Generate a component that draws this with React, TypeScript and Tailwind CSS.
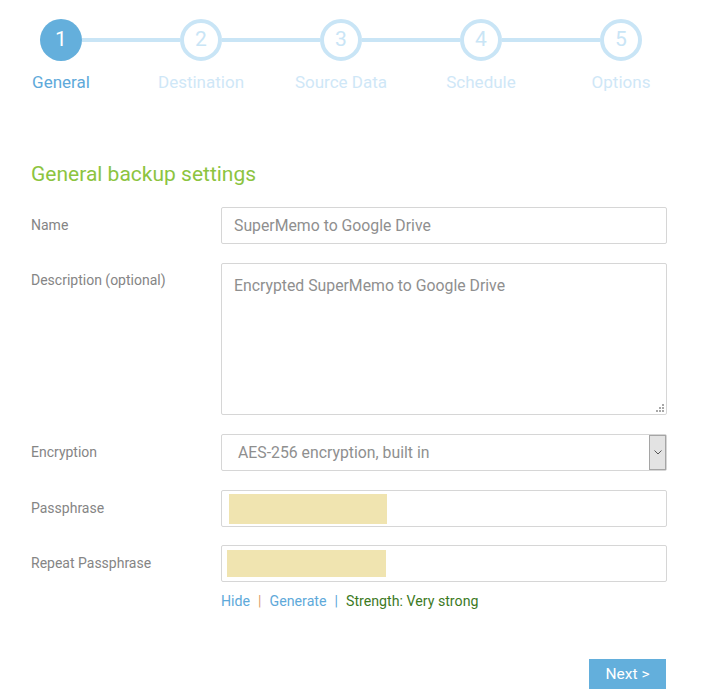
import React from "react";

const steps = ["General", "Destination", "Source Data", "Schedule", "Options"];

const Stepper = () => (
  <div className="flex items-start pl-[40px] pt-[19px]">
    {steps.map((label, i) => (
      <React.Fragment key={label}>
        {i > 0 && <div className="mt-[19px] h-[4px] w-[98px] shrink-0 bg-[#c9e5f6]" />}
        <div className="flex w-[42px] shrink-0 flex-col items-center">
          {i === 0 ? (
            <div className="flex h-[42px] w-[42px] items-center justify-center rounded-full bg-[#64afdc] text-[21px] text-white">
              {i + 1}
            </div>
          ) : (
            <div className="flex h-[42px] w-[42px] items-center justify-center rounded-full border-[4px] border-[#c9e5f6] bg-white text-[21px] text-[#c9e5f6]">
              {i + 1}
            </div>
          )}
          <div
            className={
              "mt-[10px] whitespace-nowrap text-[17px] leading-[22px] " +
              (i === 0 ? "text-[#5ea9da]" : "text-[#cfe7f7]")
            }
          >
            {label}
          </div>
        </div>
      </React.Fragment>
    ))}
  </div>
);

const Row = ({ label, top, children }: { label: string; top?: boolean; children: React.ReactNode }) => (
  <div className={"flex " + (top ? "items-start" : "items-center")}>
    <div className={"w-[190px] shrink-0 text-[14px] text-[#858585] " + (top ? "pt-[7px]" : "")}>{label}</div>
    <div className="w-[446px]">{children}</div>
  </div>
);

export default function App() {
  return (
    <div className="h-[698px] w-[710px] bg-white font-['Roboto',sans-serif]">
      <Stepper />
      <div className="pl-[31px]">
        <h2 className="mt-[67px] text-[21px] leading-[28px] text-[#8cc43f]">General backup settings</h2>
        <div className="mt-[19px] flex flex-col">
          <Row label="Name">
            <div className="flex h-[37px] items-center rounded-[2px] border border-[#d6d6d6] px-[12px] text-[15.8px] text-[#8f8f8f]">
              SuperMemo to Google Drive
            </div>
          </Row>
          <div className="mt-[19px]">
            <Row label="Description (optional)" top>
              <div className="relative h-[152px] rounded-[2px] border border-[#d6d6d6] px-[12px] pt-[10px] text-[15.8px] text-[#8f8f8f]">
                Encrypted SuperMemo to Google Drive
                <svg className="absolute bottom-[2px] right-[2px]" width="9" height="9" viewBox="0 0 9 9">
                  <rect x="7" y="1" width="2" height="2" fill="#a8a8a8" />
                  <rect x="4" y="4" width="2" height="2" fill="#a8a8a8" />
                  <rect x="7" y="4" width="2" height="2" fill="#a8a8a8" />
                  <rect x="1" y="7" width="2" height="2" fill="#a8a8a8" />
                  <rect x="4" y="7" width="2" height="2" fill="#a8a8a8" />
                  <rect x="7" y="7" width="2" height="2" fill="#a8a8a8" />
                </svg>
              </div>
            </Row>
          </div>
          <div className="mt-[19px]">
            <Row label="Encryption">
              <div className="flex h-[37px] items-stretch rounded-[2px] border border-[#d6d6d6] text-[15.8px] text-[#8f8f8f]">
                <div className="flex flex-1 items-center px-[16px]">AES-256 encryption, built in</div>
                <div className="flex w-[17px] items-center justify-center border border-[#a5a5a5] bg-[#e3e3e3]">
                  <svg width="8" height="5" viewBox="0 0 8 5">
                    <path d="M0.5 0.5 L4 4 L7.5 0.5" fill="none" stroke="#555" strokeWidth="1" />
                  </svg>
                </div>
              </div>
            </Row>
          </div>
          <div className="mt-[19px]">
            <Row label="Passphrase">
              <div className="flex h-[37px] items-center rounded-[2px] border border-[#d6d6d6] px-[7px]">
                <div className="h-[30px] w-[158px] bg-[#f0e4b0]" />
              </div>
            </Row>
          </div>
          <div className="mt-[18px]">
            <Row label="Repeat Passphrase">
              <div className="flex h-[37px] items-center rounded-[2px] border border-[#d6d6d6] px-[5px]">
                <div className="h-[27px] w-[159px] bg-[#f0e4b0]" />
              </div>
            </Row>
          </div>
        </div>
        <div className="ml-[190px] mt-[9px] flex items-center text-[14.2px]">
          <span className="text-[#5ea9da]">Hide</span>
          <span className="mx-[8px] text-[#e0a070]">|</span>
          <span className="text-[#5ea9da]">Generate</span>
          <span className="mx-[8px] text-[#5ea9da]">|</span>
          <span className="text-[#3d7a1f]">Strength: Very strong</span>
        </div>
        <div className="mr-[44px] mt-[47px] flex justify-end">
          <button className="h-[30px] w-[77px] bg-[#63afdc] text-[15.5px] text-white">Next &gt;</button>
        </div>
      </div>
    </div>
  );
}
